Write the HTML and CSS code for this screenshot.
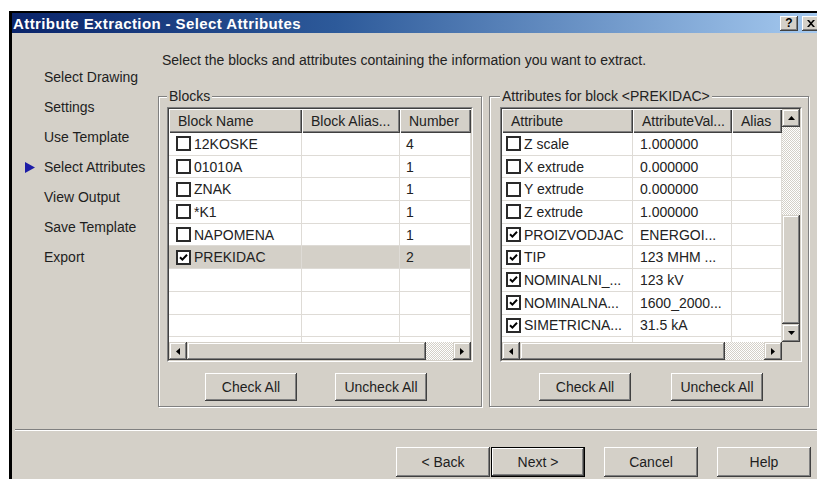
FILE: index.html
```html
<!DOCTYPE html>
<html lang="en">
<head>
<meta charset="utf-8">
<title>Attribute Extraction - Select Attributes</title>
<link rel="stylesheet" href="styles.css">
</head>
<body>
<div class="window">
  <div class="titlebar">
    <span class="title">Attribute Extraction - Select Attributes</span>
    <div class="caption-buttons">
      <span class="caption-btn help">?</span>
      <span class="caption-btn close"><svg width="8" height="7" viewBox="0 0 8 7"><path d="M0 0h2l2 2.2L6 0h2L5 3.5 8 7H6L4 4.8 2 7H0l3-3.5z" fill="#000"/></svg></span>
    </div>
  </div>

  <div class="client">
    <div class="upper">
      <ul class="steps">
        <li><span class="marker"></span>Select Drawing</li>
        <li><span class="marker"></span>Settings</li>
        <li><span class="marker"></span>Use Template</li>
        <li class="current"><span class="marker"><svg width="10" height="11" viewBox="0 0 10 11"><path d="M0 0L10 5.5L0 11z" fill="#1c1ca6"/></svg></span>Select Attributes</li>
        <li><span class="marker"></span>View Output</li>
        <li><span class="marker"></span>Save Template</li>
        <li><span class="marker"></span>Export</li>
      </ul>

      <div class="page">
        <p class="intro">Select the blocks and attributes containing the information you want to extract.</p>

        <div class="groups">
          <fieldset class="group group-blocks">
            <legend>Blocks</legend>
            <div class="listview lv-blocks">
              <div class="lv-frame">
                <div class="lv-rows">
                  <div class="lv-row lv-head">
                    <div class="cell">Block Name</div>
                    <div class="cell">Block Alias...</div>
                    <div class="cell">Number</div>
                  </div>
                  <div class="lv-row">
                    <div class="cell"><span class="chk"></span>12KOSKE</div>
                    <div class="cell"></div>
                    <div class="cell num">4</div>
                  </div>
                  <div class="lv-row">
                    <div class="cell"><span class="chk"></span>01010A</div>
                    <div class="cell"></div>
                    <div class="cell num">1</div>
                  </div>
                  <div class="lv-row">
                    <div class="cell"><span class="chk"></span>ZNAK</div>
                    <div class="cell"></div>
                    <div class="cell num">1</div>
                  </div>
                  <div class="lv-row">
                    <div class="cell"><span class="chk"></span>*K1</div>
                    <div class="cell"></div>
                    <div class="cell num">1</div>
                  </div>
                  <div class="lv-row">
                    <div class="cell"><span class="chk"></span>NAPOMENA</div>
                    <div class="cell"></div>
                    <div class="cell num">1</div>
                  </div>
                  <div class="lv-row selected">
                    <div class="cell"><span class="chk on"><svg width="9" height="9" viewBox="0 0 9 9"><path d="M1 4.2l2.4 2.4L8 1.8" fill="none" stroke="#000" stroke-width="2"/></svg></span>PREKIDAC</div>
                    <div class="cell"></div>
                    <div class="cell num">2</div>
                  </div>
                  <div class="lv-row"><div class="cell"></div><div class="cell"></div><div class="cell"></div></div>
                  <div class="lv-row"><div class="cell"></div><div class="cell"></div><div class="cell"></div></div>
                  <div class="lv-row"><div class="cell"></div><div class="cell"></div><div class="cell"></div></div>
                  <div class="lv-row"><div class="cell"></div><div class="cell"></div><div class="cell"></div></div>
                </div>
                <div class="hscroll blocks-h">
                  <span class="sb-btn"><svg width="4" height="7" viewBox="0 0 4 7"><path d="M4 0v7L0 3.5z" fill="#000"/></svg></span>
                  <span class="sb-thumb"></span>
                  <span class="sb-track"></span>
                  <span class="sb-btn"><svg width="4" height="7" viewBox="0 0 4 7"><path d="M0 0v7L4 3.5z" fill="#000"/></svg></span>
                </div>
              </div>
            </div>
            <div class="group-buttons">
              <button class="btn">Check All</button>
              <button class="btn">Uncheck All</button>
            </div>
          </fieldset>

          <fieldset class="group group-attrs">
            <legend>Attributes for block &lt;PREKIDAC&gt;</legend>
            <div class="listview lv-attrs">
              <div class="lv-frame">
                <div class="lv-rows">
                  <div class="lv-row lv-head">
                    <div class="cell">Attribute</div>
                    <div class="cell">AttributeVal...</div>
                    <div class="cell">Alias</div>
                  </div>
                  <div class="lv-row">
                    <div class="cell"><span class="chk"></span>Z scale</div>
                    <div class="cell">1.000000</div>
                    <div class="cell"></div>
                  </div>
                  <div class="lv-row">
                    <div class="cell"><span class="chk"></span>X extrude</div>
                    <div class="cell">0.000000</div>
                    <div class="cell"></div>
                  </div>
                  <div class="lv-row">
                    <div class="cell"><span class="chk"></span>Y extrude</div>
                    <div class="cell">0.000000</div>
                    <div class="cell"></div>
                  </div>
                  <div class="lv-row">
                    <div class="cell"><span class="chk"></span>Z extrude</div>
                    <div class="cell">1.000000</div>
                    <div class="cell"></div>
                  </div>
                  <div class="lv-row">
                    <div class="cell"><span class="chk on"><svg width="9" height="9" viewBox="0 0 9 9"><path d="M1 4.2l2.4 2.4L8 1.8" fill="none" stroke="#000" stroke-width="2"/></svg></span>PROIZVODJAC</div>
                    <div class="cell">ENERGOI...</div>
                    <div class="cell"></div>
                  </div>
                  <div class="lv-row">
                    <div class="cell"><span class="chk on"><svg width="9" height="9" viewBox="0 0 9 9"><path d="M1 4.2l2.4 2.4L8 1.8" fill="none" stroke="#000" stroke-width="2"/></svg></span>TIP</div>
                    <div class="cell">123 MHM ...</div>
                    <div class="cell"></div>
                  </div>
                  <div class="lv-row">
                    <div class="cell"><span class="chk on"><svg width="9" height="9" viewBox="0 0 9 9"><path d="M1 4.2l2.4 2.4L8 1.8" fill="none" stroke="#000" stroke-width="2"/></svg></span>NOMINALNI_...</div>
                    <div class="cell">123 kV</div>
                    <div class="cell"></div>
                  </div>
                  <div class="lv-row">
                    <div class="cell"><span class="chk on"><svg width="9" height="9" viewBox="0 0 9 9"><path d="M1 4.2l2.4 2.4L8 1.8" fill="none" stroke="#000" stroke-width="2"/></svg></span>NOMINALNA...</div>
                    <div class="cell">1600_2000...</div>
                    <div class="cell"></div>
                  </div>
                  <div class="lv-row">
                    <div class="cell"><span class="chk on"><svg width="9" height="9" viewBox="0 0 9 9"><path d="M1 4.2l2.4 2.4L8 1.8" fill="none" stroke="#000" stroke-width="2"/></svg></span>SIMETRICNA...</div>
                    <div class="cell">31.5 kA</div>
                    <div class="cell"></div>
                  </div>
                  <div class="lv-row"><div class="cell"></div><div class="cell"></div><div class="cell"></div></div>
                </div>
                <div class="vscroll">
                  <span class="sb-btn"><svg width="7" height="4" viewBox="0 0 7 4"><path d="M0 4h7L3.5 0z" fill="#000"/></svg></span>
                  <span class="sb-track"></span>
                  <span class="sb-thumb"></span>
                  <span class="sb-btn"><svg width="7" height="4" viewBox="0 0 7 4"><path d="M0 0h7L3.5 4z" fill="#000"/></svg></span>
                </div>
                <div class="hscroll attrs-h">
                  <span class="sb-btn"><svg width="4" height="7" viewBox="0 0 4 7"><path d="M4 0v7L0 3.5z" fill="#000"/></svg></span>
                  <span class="sb-thumb"></span>
                  <span class="sb-track"></span>
                  <span class="sb-btn"><svg width="4" height="7" viewBox="0 0 4 7"><path d="M0 0v7L4 3.5z" fill="#000"/></svg></span>
                </div>
                <div class="sb-corner"></div>
              </div>
            </div>
            <div class="group-buttons">
              <button class="btn">Check All</button>
              <button class="btn">Uncheck All</button>
            </div>
          </fieldset>
        </div>
      </div>
    </div>

    <div class="sep"></div>

    <div class="footer">
      <button class="btn wide">&lt; Back</button>
      <button class="btn wide default">Next &gt;</button>
      <button class="btn wide spaced">Cancel</button>
      <button class="btn wide spaced">Help</button>
    </div>
  </div>
</div>
</body>
</html>
```

FILE: styles.css
```css
/* Wizard dialog: Attribute Extraction */
html, body {
  margin: 0;
  background: #fff;
  overflow: hidden;
}

body {
  font-family: "Liberation Sans", Arial, sans-serif;
  font-size: 14px;
  color: #222;
}

.window {
  margin: 11px 0 0 9px;
  width: 810px;
  border-top: 2px solid #000;
  border-left: 3px solid #000;
}

/* ---- caption ---- */
.titlebar {
  height: 20px;
  display: flex;
  align-items: center;
  padding: 0 2px 0 1px;
  background: linear-gradient(90deg, #0a246a 0%, #2d5a9a 40%, #a6caf0 100%);
}

.title {
  color: #fff;
  font-weight: bold;
  font-size: 15px;
  letter-spacing: 0.4px;
  white-space: nowrap;
}

.caption-buttons {
  margin-left: auto;
  display: flex;
  gap: 4px;
}

.caption-btn {
  width: 18px;
  height: 15px;
  display: flex;
  align-items: center;
  justify-content: center;
  background: #d4d0c8;
  font-weight: bold;
  font-size: 12px;
  color: #000;
  box-shadow: inset -1px -1px #404040, inset 1px 1px #fff, inset -2px -2px #808080;
}

/* ---- client area ---- */
.client {
  background: #d4d0c8;
  height: 450px;
}

.upper {
  display: flex;
  height: 396px;
}

.steps {
  width: 146px;
  flex: none;
  margin: 0;
  padding: 29px 0 0;
  list-style: none;
}

.steps li {
  display: flex;
  align-items: center;
  height: 30px;
  white-space: nowrap;
  color: #1e1e1e;
}

.marker {
  width: 32px;
  flex: none;
  display: flex;
  align-items: center;
  padding-left: 13px;
  box-sizing: border-box;
}

.page {
  flex: 1;
  padding-top: 20px;
}

.intro {
  margin: 0 0 0 4px;
  height: 15px;
  line-height: 15px;
  white-space: nowrap;
}

.groups {
  display: flex;
  gap: 7px;
  margin-top: 21px;
}

/* ---- group boxes ---- */
.group {
  margin: 0;
  min-width: 0;
  box-sizing: border-box;
  border: 1px solid #808080;
  box-shadow: inset 1px 1px #fff, 1px 1px #fff;
  padding: 3px 8px 5px 8px;
}

.group-blocks { width: 324px; }
.group-attrs { width: 320px; padding: 3px 6px 5px 10px; }

.group legend {
  padding: 0 2px;
  line-height: 15px;
  background: #d4d0c8;
  white-space: nowrap;
}

.group-buttons {
  display: flex;
  justify-content: center;
  gap: 38px;
  margin-top: 11px;
}

.group-blocks .group-buttons { padding-right: 8px; }
.group-attrs .group-buttons { gap: 40px; }

/* ---- list views ---- */
.listview {
  height: 255px;
  box-sizing: border-box;
  border: 1px solid;
  border-color: #808080 #fff #fff #808080;
}

.lv-frame {
  height: 100%;
  box-sizing: border-box;
  border: 1px solid;
  border-color: #404040 #d4d0c8 #d4d0c8 #404040;
  display: grid;
}

.lv-blocks .lv-frame {
  grid-template-columns: 1fr;
  grid-template-rows: 1fr 18px;
}

.lv-attrs .lv-frame {
  grid-template-columns: 1fr 18px;
  grid-template-rows: 1fr 18px;
}

.lv-rows {
  overflow: hidden;
  background: #fff;
  min-height: 0;
}

.lv-row {
  display: grid;
  height: 22.7px;
  box-sizing: border-box;
  border-bottom: 1px solid #dedbd6;
}

.lv-blocks .lv-row { grid-template-columns: 133px 98px 1fr; }
.lv-attrs .lv-row { grid-template-columns: 131px 99px 1fr; }

.cell {
  display: flex;
  align-items: center;
  padding-left: 7px;
  border-right: 1px solid #dedbd6;
  white-space: nowrap;
  overflow: hidden;
}

.lv-attrs .cell:first-child { padding-left: 4px; }

.cell.num { padding-left: 6px; }

.lv-row.selected { background: #d4d0c8; }

.lv-row.lv-head {
  height: 24px;
  border-bottom: none;
}

.lv-head .cell,
.lv-attrs .lv-head .cell:first-child {
  background: #d4d0c8;
  padding-left: 9px;
  border-right: none;
  box-shadow: inset 1px 1px #fff, inset -1px -1px #404040, inset -2px -2px #808080;
}

.chk {
  width: 15px;
  height: 15px;
  flex: none;
  box-sizing: border-box;
  margin-right: 3px;
  border: 2px solid #2a2a2a;
  background: #fff;
  display: flex;
  align-items: center;
  justify-content: center;
}

/* ---- scroll bars ---- */
.hscroll {
  display: grid;
  background: #d4d0c8;
}

.blocks-h { grid-template-columns: 18px 239px 1fr 18px; }
.attrs-h { grid-template-columns: 18px 205px 1fr 18px; }

.vscroll {
  grid-row: 1;
  grid-column: 2;
  display: grid;
  grid-template-rows: 18px 88px 1fr 18px;
}

.sb-corner { background: #d4d0c8; }

.sb-btn,
.sb-thumb {
  background: #d4d0c8;
  box-shadow: inset -1px -1px #404040, inset 1px 1px #d4d0c8, inset -2px -2px #808080, inset 2px 2px #fff;
}

.sb-btn {
  display: flex;
  align-items: center;
  justify-content: center;
}

.sb-track {
  background-color: #fff;
  background-image: repeating-conic-gradient(#d4d0c8 0 25%, #fff 0 50%);
  background-size: 2px 2px;
}

/* ---- push buttons ---- */
.btn {
  font: inherit;
  color: #1e1e1e;
  width: 92px;
  height: 28px;
  padding: 0;
  border: none;
  background: #d4d0c8;
  box-shadow: inset -1px -1px #404040, inset 1px 1px #fff, inset -2px -2px #808080;
}

.btn.wide {
  width: 94px;
  height: 30px;
}

.btn.default {
  margin-left: 1px;
  border: 1px solid #000;
}

.btn.spaced { margin-left: 19px; }

.sep {
  margin-left: 3px;
  height: 2px;
  box-sizing: border-box;
  border-top: 1px solid #808080;
  border-bottom: 1px solid #fff;
}

.footer {
  display: flex;
  padding-left: 384px;
  margin-top: 16px;
}
```
